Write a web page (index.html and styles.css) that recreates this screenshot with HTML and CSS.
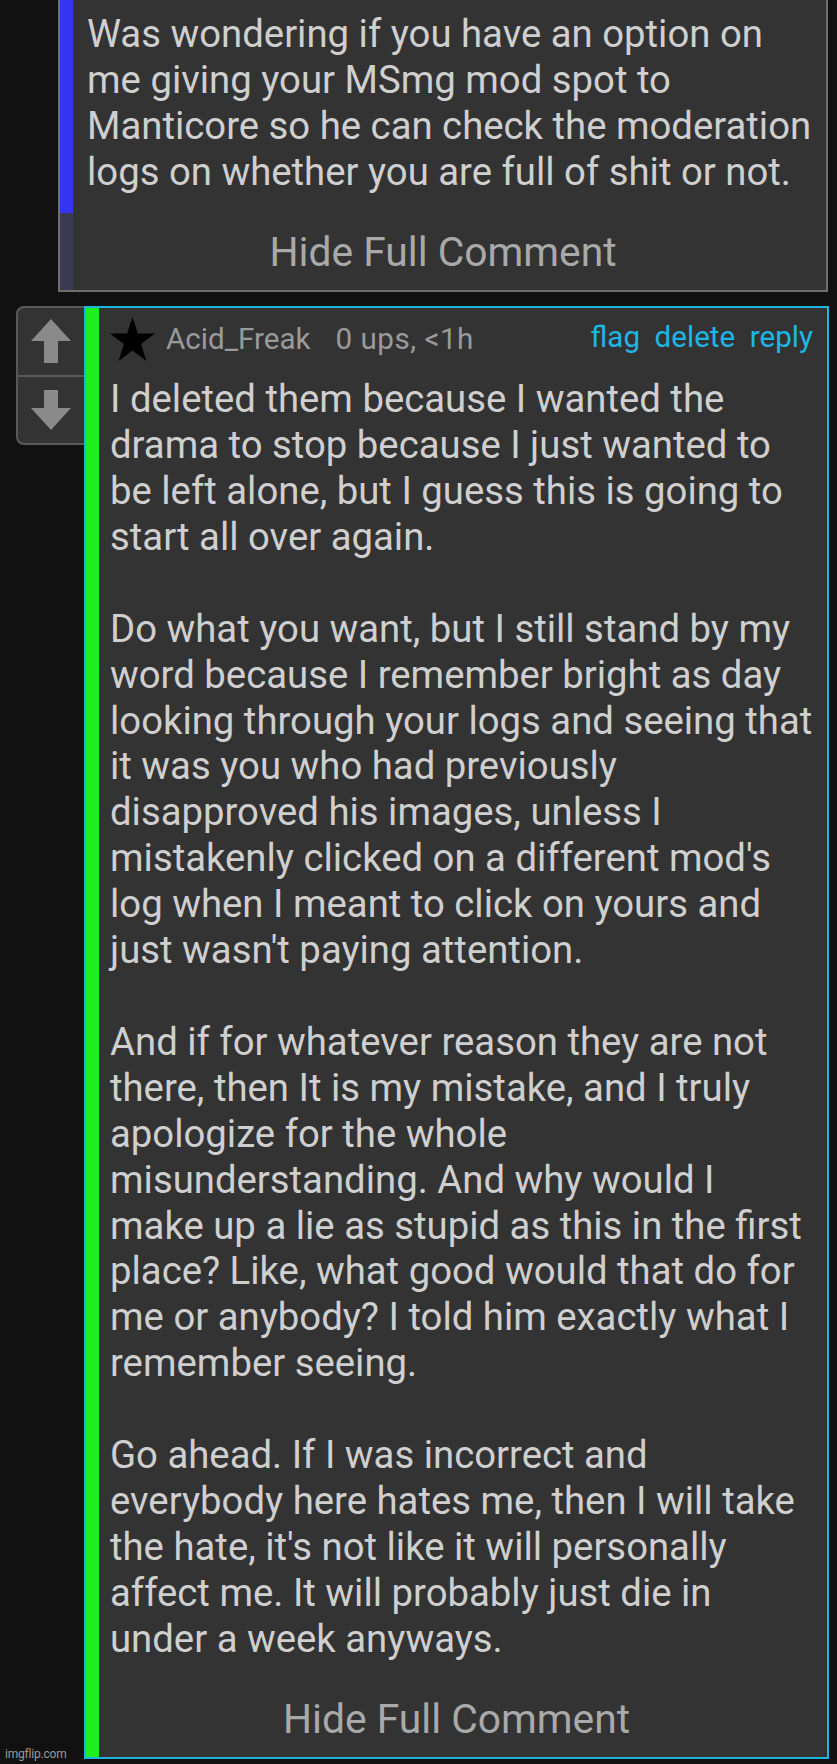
FILE: index.html
```html
<!DOCTYPE html>
<html lang="en">
<head>
<meta charset="utf-8">
<title>Comments</title>
<link rel="stylesheet" href="styles.css">
</head>
<body>
<div class="page">
  <div class="comment comment-parent">
    <div class="body">
      <p>Was wondering if you have an option on<br>me giving your MSmg mod spot to<br>Manticore so he can check the moderation<br>logs on whether you are full of shit or not.</p>
    </div>
    <div class="toggle">Hide Full Comment</div>
  </div>

  <div class="thread">
    <div class="vote">
      <div class="vote-cell">
        <svg width="40" height="44" viewBox="0 0 40 44"><polygon points="20,0 40,22 27,22 27,44 13,44 13,22 0,22" fill="#8a8a8a"/></svg>
      </div>
      <div class="vote-cell vote-down">
        <svg width="40" height="40" viewBox="0 0 40 40"><polygon points="13,0 27,0 27,18 40,18 20,40 0,18 13,18" fill="#8a8a8a"/></svg>
      </div>
    </div>
    <div class="comment comment-reply">
      <div class="meta">
        <svg class="star" width="45" height="45" viewBox="0 0 45 45"><polygon points="22.5,0 27.8,16.6 45,16.6 31.1,26.9 36.4,44 22.5,33.5 8.6,44 13.9,26.9 0,16.6 17.2,16.6" fill="#000"/></svg>
        <span class="user">Acid_Freak</span>
        <span class="age">0 ups, &lt;1h</span>
        <span class="actions"><a href="#">flag</a><a href="#">delete</a><a href="#">reply</a></span>
      </div>
      <div class="body">
        <p>I deleted them because I wanted the<br>drama to stop because I just wanted to<br>be left alone, but I guess this is going to<br>start all over again.</p>
        <p>Do what you want, but I still stand by my<br>word because I remember bright as day<br>looking through your logs and seeing that<br>it was you who had previously<br>disapproved his images, unless I<br>mistakenly clicked on a different mod's<br>log when I meant to click on yours and<br>just wasn't paying attention.</p>
        <p>And if for whatever reason they are not<br>there, then It is my mistake, and I truly<br>apologize for the whole<br>misunderstanding. And why would I<br>make up a lie as stupid as this in the first<br>place? Like, what good would that do for<br>me or anybody? I told him exactly what I<br>remember seeing.</p>
        <p>Go ahead. If I was incorrect and<br>everybody here hates me, then I will take<br>the hate, it's not like it will personally<br>affect me. It will probably just die in<br>under a week anyways.</p>
      </div>
      <div class="toggle">Hide Full Comment</div>
    </div>
  </div>
</div>
<div class="watermark">imgflip.com</div>
</body>
</html>
```

FILE: styles.css
```css
html, body {
  margin: 0;
  padding: 0;
  background: #111111;
}

body {
  font-family: Roboto, "Liberation Sans", Arial, sans-serif;
  width: 837px;
  height: 1764px;
  overflow: hidden;
  position: relative;
}

.page {
  display: flex;
  flex-direction: column;
}

.comment {
  background-color: #333333;
  box-sizing: border-box;
}

.comment-parent {
  margin: 0 9px 0 58px;
  border: 2px solid #6e6e6e;
  border-top: 0;
  padding-top: 10.8px;
  padding-bottom: 13.5px;
  background-image:
    linear-gradient(#3535f4, #3535f4),
    linear-gradient(#3b3b56, #3b3b56);
  background-repeat: no-repeat;
  background-position: 0 0, 0 0;
  background-size: 13px 213px, 13px 100%;
}

.comment-parent .body {
  padding-left: 27px;
  padding-right: 8px;
}

.body {
  color: #cfcfcf;
  font-size: 38.3px;
  line-height: 45.9px;
  white-space: nowrap;
}

.body p {
  margin: 0 0 45.9px;
}

.body p:last-child {
  margin-bottom: 0;
}

.toggle {
  color: #a9a9a9;
  font-size: 40.8px;
  line-height: 45.9px;
  text-align: center;
  margin-top: 35.8px;
}

.thread {
  display: flex;
  align-items: flex-start;
  margin: 14px 8px 0 16px;
}

.vote {
  flex: none;
  width: 68px;
  box-sizing: border-box;
  border: 2px solid #595959;
  border-right: 0;
  border-radius: 8px 0 0 8px;
  background: #333333;
  display: flex;
  flex-direction: column;
}

.vote-cell {
  height: 67px;
  display: flex;
  align-items: center;
  justify-content: center;
}

.vote-cell svg {
  display: block;
}

.vote-down {
  height: 66px;
  border-top: 2px solid #595959;
}

.comment-reply {
  flex: 1;
  min-width: 0;
  border: 2px solid #1db4de;
  box-shadow: inset 13px 0 0 #1fef1f;
  padding-top: 9px;
  padding-bottom: 14px;
}

.meta {
  display: flex;
  align-items: center;
  height: 45px;
  padding-left: 24px;
  padding-right: 14px;
  font-size: 29.6px;
  color: #9a9a9a;
}

.star {
  display: block;
  flex: none;
}

.user {
  margin-left: 11px;
}

.age {
  margin-left: 25px;
  letter-spacing: 0.5px;
}

.actions {
  margin-left: auto;
  margin-bottom: 4px;
  display: flex;
}

.actions a {
  color: #1eb6e4;
  text-decoration: none;
  margin-left: 14.5px;
}

.comment-reply .body {
  margin-top: 14.6px;
  padding-left: 24px;
  padding-right: 10px;
}

.comment-reply .toggle {
  margin-top: 35.2px;
}

.watermark {
  position: absolute;
  left: 5px;
  bottom: 3px;
  font-size: 12px;
  color: #9a9a9a;
  letter-spacing: -0.2px;
}
```
